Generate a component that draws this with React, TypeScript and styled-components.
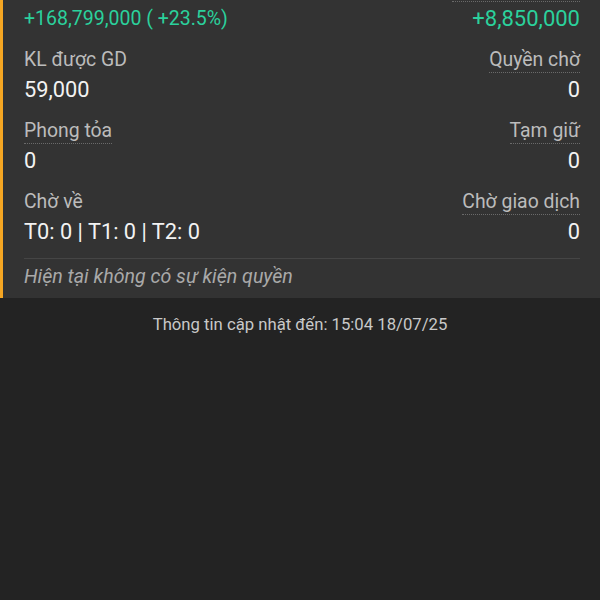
import React from 'react';
import styled, { createGlobalStyle } from 'styled-components';

const GlobalStyle = createGlobalStyle`
    html, body {
        margin: 0;
        padding: 0;
        background: #232323;
        font-family: Roboto, 'Noto Sans', 'Liberation Sans', sans-serif;
    }
`;

const Page = styled.div`
    width: 600px;
    height: 600px;
    overflow: hidden;
    background: #232323;
`;

const Card = styled.section`
    margin-top: -23px;
    padding: 0 20px 9px 21px;
    background: #333333;
    border-left: 3px solid #f5a623;
`;

const Row = styled.div`
    display: grid;
    grid-template-columns: 1fr 1fr;
    margin-bottom: 15px;

    &:last-of-type {
        margin-bottom: 12px;
    }
`;

const Cell = styled.div<{ $right?: boolean }>`
    display: flex;
    flex-direction: column;
    align-items: ${({ $right }) => ($right ? 'flex-end' : 'flex-start')};
`;

const Label = styled.span<{ $dotted?: boolean }>`
    font-size: 19.4px;
    line-height: 24px;
    color: #bcbcbc;
    border-bottom: 1px dotted
        ${({ $dotted }) => ($dotted ? '#6a6a6a' : 'transparent')};
`;

const Value = styled.span<{ $tone?: 'up'; $size?: number }>`
    margin-top: 3px;
    font-size: ${({ $size }) => $size ?? 21.8}px;
    line-height: 28px;
    color: ${({ $tone }) => ($tone === 'up' ? '#2bd19c' : '#f2f2f2')};
`;

const Divider = styled.hr`
    margin: 0;
    border: none;
    border-top: 1px solid #454545;
`;

const Note = styled.p`
    margin: 6px 0 0;
    font-size: 19.6px;
    line-height: 24px;
    font-style: italic;
    color: #a9a9a9;
`;

const Footer = styled.p`
    margin: 0;
    padding-top: 17px;
    text-align: center;
    font-size: 16.7px;
    line-height: 20px;
    color: #c9c9c9;
`;

type Field = {
    label: string;
    value: string;
    dotted?: boolean;
    tone?: 'up';
    size?: number;
};

const rows: [Field, Field][] = [
    [
        { label: 'Lãi/lỗ', value: '+168,799,000 ( +23.5%)', tone: 'up', size: 19.5 },
        { label: 'Lãi/lỗ hôm nay', value: '+8,850,000', dotted: true, tone: 'up', size: 22 },
    ],
    [
        { label: 'KL được GD', value: '59,000' },
        { label: 'Quyền chờ', value: '0', dotted: true },
    ],
    [
        { label: 'Phong tỏa', value: '0', dotted: true },
        { label: 'Tạm giữ', value: '0', dotted: true },
    ],
    [
        { label: 'Chờ về', value: 'T0: 0 | T1: 0 | T2: 0' },
        { label: 'Chờ giao dịch', value: '0', dotted: true },
    ],
];

const App: React.FC = () => {
    return (
        <Page>
            <GlobalStyle />
            <Card>
                {rows.map(([left, right]) => (
                    <Row key={left.label}>
                        {[left, right].map((field, i) => (
                            <Cell key={field.label} $right={i === 1}>
                                <Label $dotted={field.dotted}>{field.label}</Label>
                                <Value $tone={field.tone} $size={field.size}>
                                    {field.value}
                                </Value>
                            </Cell>
                        ))}
                    </Row>
                ))}
                <Divider />
                <Note>Hiện tại không có sự kiện quyền</Note>
            </Card>
            <Footer>Thông tin cập nhật đến: 15:04 18/07/25</Footer>
        </Page>
    );
};

export default App;
